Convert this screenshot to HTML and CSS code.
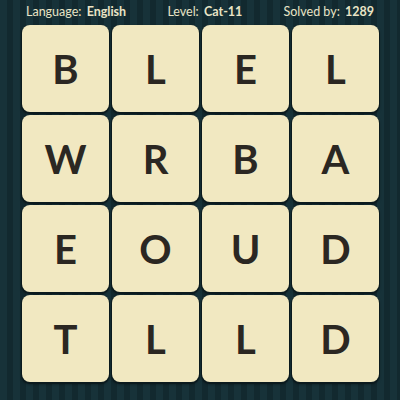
FILE: index.html
```html
<!DOCTYPE html>
<html lang="en">
<head>
    <meta charset="UTF-8">
    <meta name="viewport" content="width=device-width, initial-scale=1.0">
    <title>Word Puzzle - Cat-11</title>
    <link rel="stylesheet" href="styles.css">
</head>
<body>
    <div class="info-bar">
        <span>Language: <b>English</b></span>
        <span>Level: <b>Cat-11</b></span>
        <span>Solved by: <b>1289</b></span>
    </div>

    <div class="board">
        <div class="tile">B</div>
        <div class="tile">L</div>
        <div class="tile">E</div>
        <div class="tile">L</div>

        <div class="tile">W</div>
        <div class="tile">R</div>
        <div class="tile">B</div>
        <div class="tile">A</div>

        <div class="tile">E</div>
        <div class="tile">O</div>
        <div class="tile">U</div>
        <div class="tile">D</div>

        <div class="tile">T</div>
        <div class="tile">L</div>
        <div class="tile">L</div>
        <div class="tile">D</div>
    </div>
</body>
</html>
```

FILE: styles.css
```css
:root {
    --bg-color: #173239;
    --bg-stripe: #12292f;
    --tile-color: #f1e8c1;
    --tile-edge: #0b1a1e;
    --letter-color: #2b2722;
    --info-text: #e9e4c6;
}

* {
    margin: 0;
    padding: 0;
    box-sizing: border-box;
}

body {
    width: 400px;
    height: 400px;
    overflow: hidden;
    font-family: Lato, "Open Sans", sans-serif;
    background-color: var(--bg-color);
    background-image: repeating-linear-gradient(
        90deg,
        var(--bg-color) 0px,
        var(--bg-color) 7px,
        var(--bg-stripe) 7px,
        var(--bg-stripe) 13px
    );
}

.info-bar {
    height: 22px;
    padding: 0 26px;
    display: flex;
    align-items: center;
    justify-content: space-between;
    color: var(--info-text);
    font-size: 12.5px;
}

.info-bar b {
    font-weight: 700;
    margin-left: 2px;
}

.board {
    margin: 3px 0 0 22px;
    display: grid;
    grid-template-columns: repeat(4, 87px);
    grid-auto-rows: 87px;
    gap: 3px;
}

.tile {
    display: flex;
    align-items: center;
    justify-content: center;
    background: var(--tile-color);
    border-radius: 8px;
    box-shadow: 0 1px 0 1px var(--tile-edge), 0 2px 3px rgba(0, 0, 0, 0.5);
    color: var(--letter-color);
    font-size: 40px;
    font-weight: 700;
}
```
